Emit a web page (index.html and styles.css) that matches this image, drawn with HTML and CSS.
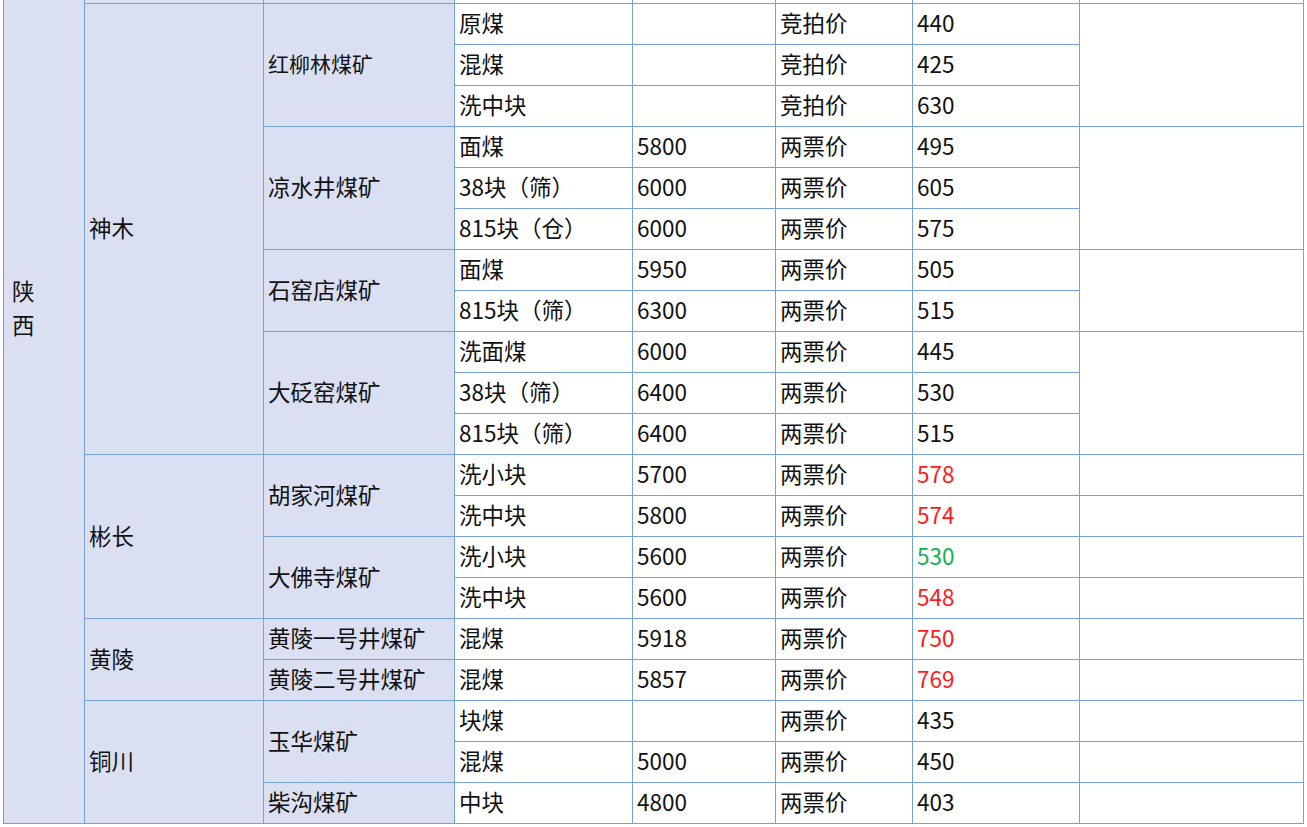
FILE: index.html
```html
<!DOCTYPE html>
<html lang="zh-CN">
<head>
<meta charset="utf-8">
<title>煤矿价格表</title>
<link rel="stylesheet" href="styles.css">
</head>
<body>
<table class="price-table">
  <colgroup>
    <col class="c-prov"><col class="c-city"><col class="c-mine"><col class="c-kind">
    <col class="c-heat"><col class="c-type"><col class="c-price"><col class="c-note">
  </colgroup>
  <tbody>
    <tr class="row-prev">
      <td class="prov" rowspan="21">陕<br>西</td>
      <td class="shade"></td><td class="shade"></td><td></td><td></td><td></td><td></td><td></td>
    </tr>
    <tr>
      <td class="shade" rowspan="11">神木</td>
      <td class="shade small" rowspan="3">红柳林煤矿</td>
      <td>原煤</td><td></td><td>竞拍价</td><td>440</td>
      <td rowspan="3"></td>
    </tr>
    <tr><td>混煤</td><td></td><td>竞拍价</td><td>425</td></tr>
    <tr><td>洗中块</td><td></td><td>竞拍价</td><td>630</td></tr>
    <tr>
      <td class="shade" rowspan="3">凉水井煤矿</td>
      <td>面煤</td><td>5800</td><td>两票价</td><td>495</td>
      <td rowspan="3"></td>
    </tr>
    <tr><td>38块（筛）</td><td>6000</td><td>两票价</td><td>605</td></tr>
    <tr><td>815块（仓）</td><td>6000</td><td>两票价</td><td>575</td></tr>
    <tr>
      <td class="shade" rowspan="2">石窑店煤矿</td>
      <td>面煤</td><td>5950</td><td>两票价</td><td>505</td>
      <td rowspan="2"></td>
    </tr>
    <tr><td>815块（筛）</td><td>6300</td><td>两票价</td><td>515</td></tr>
    <tr>
      <td class="shade" rowspan="3">大砭窑煤矿</td>
      <td>洗面煤</td><td>6000</td><td>两票价</td><td>445</td>
      <td rowspan="3"></td>
    </tr>
    <tr><td>38块（筛）</td><td>6400</td><td>两票价</td><td>530</td></tr>
    <tr><td>815块（筛）</td><td>6400</td><td>两票价</td><td>515</td></tr>
    <tr>
      <td class="shade" rowspan="4">彬长</td>
      <td class="shade" rowspan="2">胡家河煤矿</td>
      <td>洗小块</td><td>5700</td><td>两票价</td><td class="up">578</td><td></td>
    </tr>
    <tr><td>洗中块</td><td>5800</td><td>两票价</td><td class="up">574</td><td></td></tr>
    <tr>
      <td class="shade" rowspan="2">大佛寺煤矿</td>
      <td>洗小块</td><td>5600</td><td>两票价</td><td class="down">530</td><td></td>
    </tr>
    <tr><td>洗中块</td><td>5600</td><td>两票价</td><td class="up">548</td><td></td></tr>
    <tr>
      <td class="shade" rowspan="2">黄陵</td>
      <td class="shade">黄陵一号井煤矿</td>
      <td>混煤</td><td>5918</td><td>两票价</td><td class="up">750</td><td></td>
    </tr>
    <tr>
      <td class="shade">黄陵二号井煤矿</td>
      <td>混煤</td><td>5857</td><td>两票价</td><td class="up">769</td><td></td>
    </tr>
    <tr>
      <td class="shade" rowspan="3">铜川</td>
      <td class="shade" rowspan="2">玉华煤矿</td>
      <td>块煤</td><td></td><td>两票价</td><td>435</td><td></td>
    </tr>
    <tr><td>混煤</td><td>5000</td><td>两票价</td><td>450</td><td></td></tr>
    <tr>
      <td class="shade">柴沟煤矿</td>
      <td>中块</td><td>4800</td><td>两票价</td><td>403</td><td></td>
    </tr>
  </tbody>
</table>
</body>
</html>
```

FILE: styles.css
```css
html, body {
  margin: 0;
  padding: 0;
  background: #ffffff;
  overflow: hidden;
}

.price-table {
  border-collapse: collapse;
  table-layout: fixed;
  width: 1300px;
  margin: -38px 0 0 3px;
  font-family: "Noto Sans CJK SC", "Noto Sans", sans-serif;
  font-size: 22.5px;
  color: #111111;
}

.c-prov { width: 81px; }
.c-city { width: 179px; }
.c-mine { width: 191px; }
.c-kind { width: 178px; }
.c-heat { width: 143px; }
.c-type { width: 137px; }
.c-price { width: 167px; }
.c-note { width: 224px; }

.price-table td {
  border: 1px solid #73a2dc;
  height: 41px;
  padding: 0 4px 3px;
  box-sizing: border-box;
  vertical-align: middle;
  white-space: nowrap;
  line-height: 1.2;
  background: #ffffff;
}

.price-table td.shade {
  background: #dae0f2;
}

.price-table td.prov {
  background: #dae0f2;
  vertical-align: top;
  padding: 310px 0 0 8px;
  line-height: 34px;
}

.price-table td.small {
  font-size: 21px;
}

.price-table td.up {
  color: #ff1a1a;
}

.price-table td.down {
  color: #12b050;
}
```
